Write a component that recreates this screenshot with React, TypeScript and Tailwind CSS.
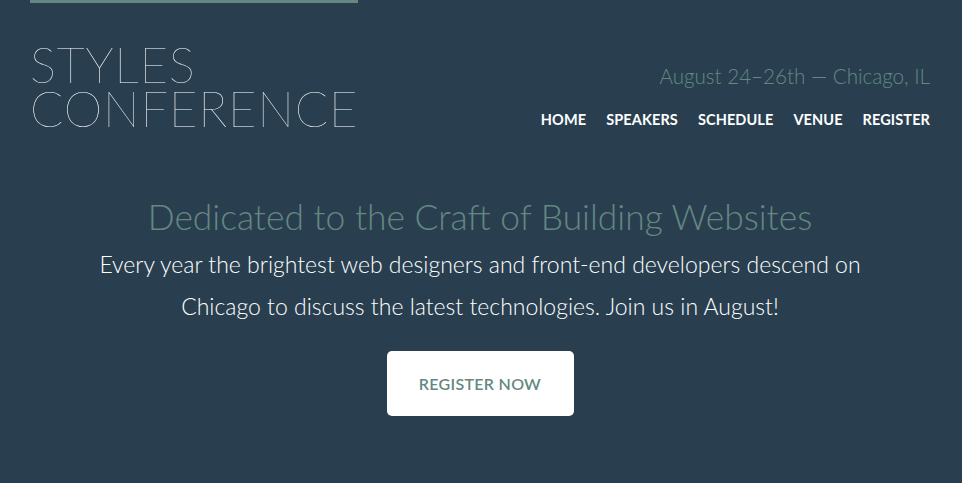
import React from "react";

export default function App() {
  const nav = ["Home", "Speakers", "Schedule", "Venue", "Register"];
  return (
    <div
      className="min-h-[483px] w-full bg-[#293f50] text-white"
      style={{ fontFamily: "Lato, 'Open Sans', sans-serif" }}
    >
      <div className="ml-[30px] w-[900px]">
        <header className="flex items-start justify-between">
          <div className="flex flex-col">
            <div className="h-[3px] w-[328px] bg-[#648880]" />
            <h1 className="mt-[39px] text-[49px] font-[100] uppercase leading-[44px] tracking-[0.8px] text-white">
              Styles
              <br />
              Conference
            </h1>
          </div>
          <div className="flex flex-col items-end pt-[62px]">
            <p className="text-[20.6px] font-light leading-[28px] text-[#648880]">
              August 24–26th — Chicago, IL
            </p>
            <nav className="mt-[20px] flex gap-[20px]">
              {nav.map((n) => (
                <a
                  key={n}
                  className="text-[14.5px] font-bold uppercase leading-[20px] tracking-[0.1px] text-white"
                >
                  {n}
                </a>
              ))}
            </nav>
          </div>
        </header>
        <section className="flex flex-col items-center pt-[65px] text-center">
          <h2 className="text-[35.4px] font-light leading-[44px] text-[#648880]">
            Dedicated to the Craft of Building Websites
          </h2>
          <p className="mt-[4px] text-[23px] font-light leading-[42px] text-white">
            Every year the brightest web designers and front-end developers descend on
            <br />
            Chicago to discuss the latest technologies. Join us in August!
          </p>
          <a className="mt-[24px] flex h-[65px] w-[187px] items-center justify-center rounded-[5px] bg-white text-[16px] font-semibold uppercase tracking-[0.3px] text-[#648880]">
            Register Now
          </a>
        </section>
      </div>
    </div>
  );
}
